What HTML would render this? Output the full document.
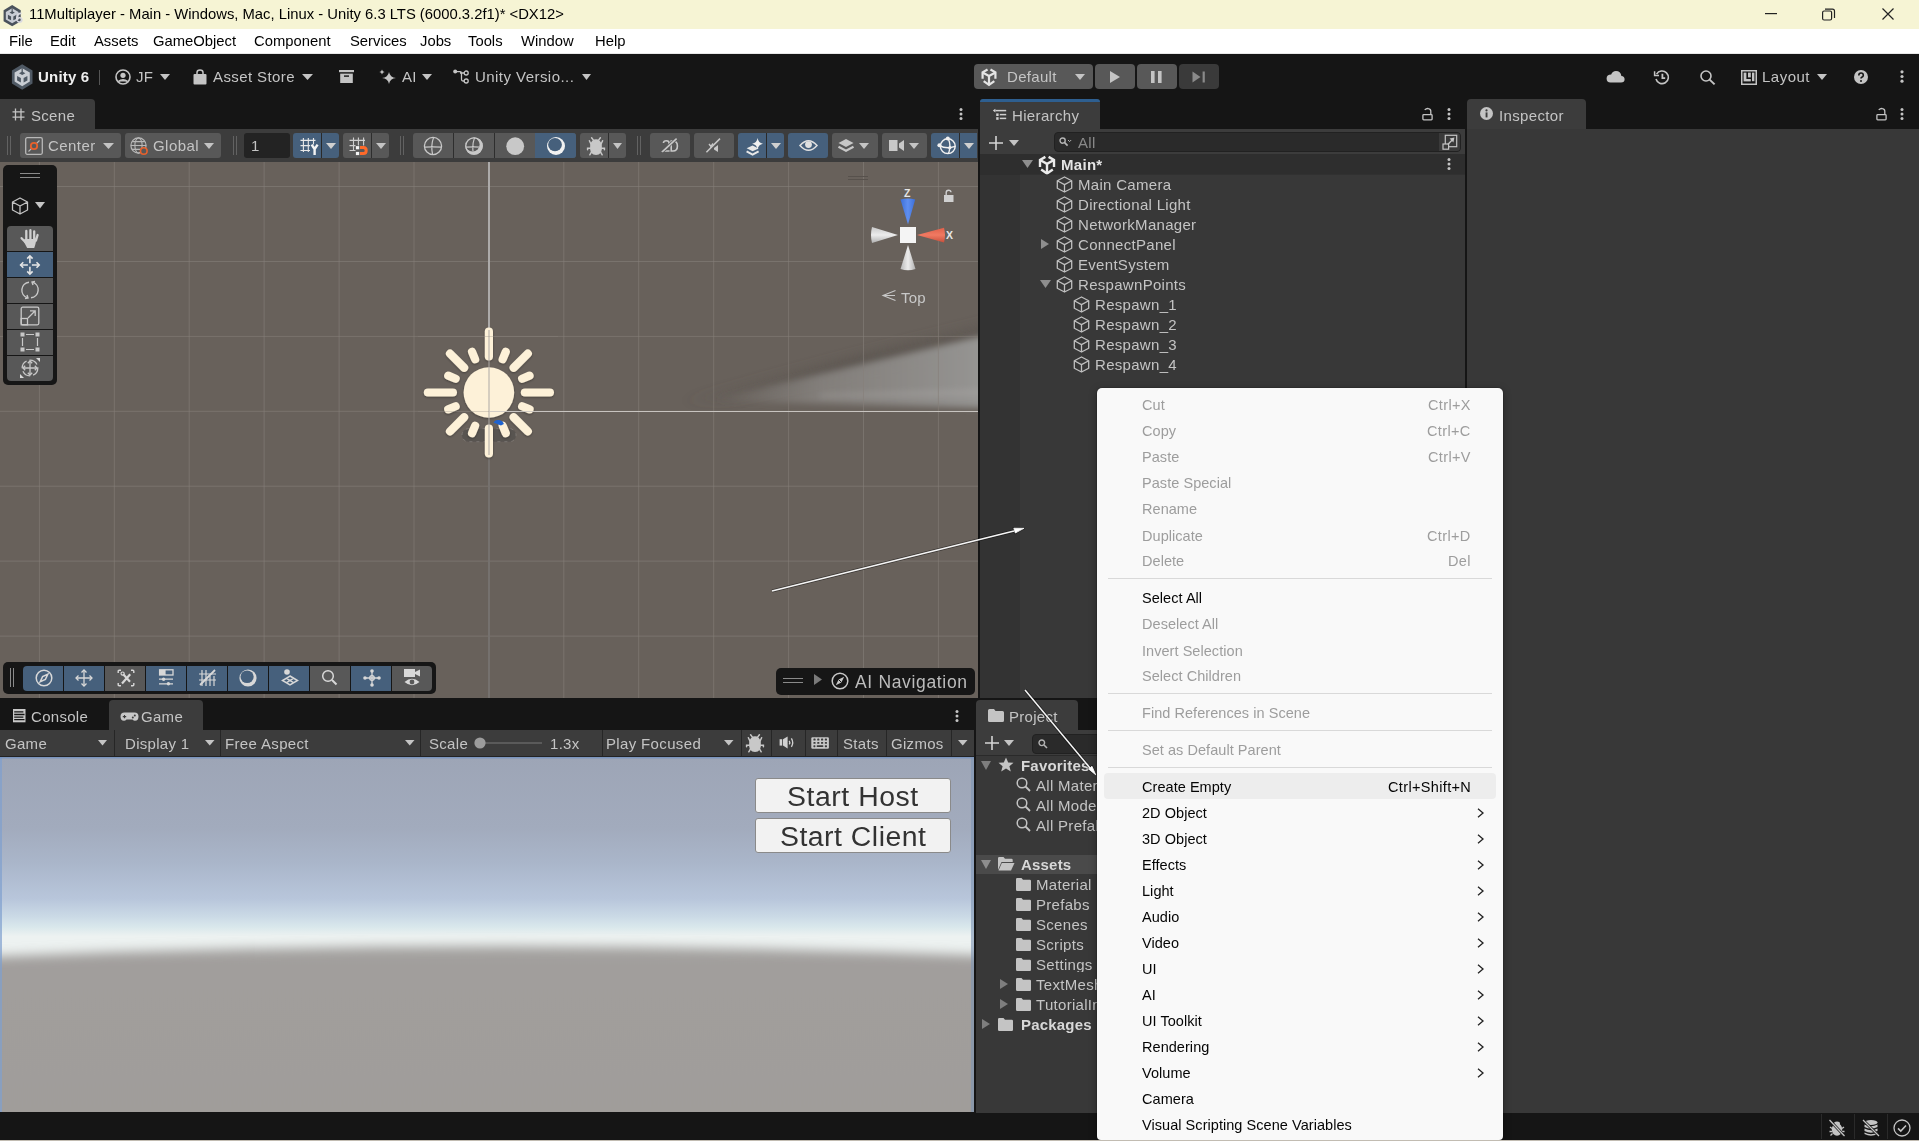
<!DOCTYPE html>
<html><head><meta charset="utf-8"><style>
html,body{margin:0;padding:0;}
body{width:1919px;height:1141px;position:relative;overflow:hidden;background:#151515;font-family:"Liberation Sans",sans-serif;}
.t{position:absolute;white-space:nowrap;line-height:1;will-change:transform;}
.r{position:absolute;}
.s{position:absolute;overflow:visible;}
</style></head><body>
<div class="r" style="left:0px;top:0px;width:1919px;height:29px;background:#f6f4d4;"></div>
<div class="t" style="left:29px;top:7.47px;font-size:14.8px;color:#000;">11Multiplayer - Main - Windows, Mac, Linux - Unity 6.3 LTS (6000.3.2f1)* &lt;DX12&gt;</div>
<svg class="s" style="left:1765px;top:13px;" width="12" height="2" viewBox="0 0 12 2"><rect x="0" y="0" width="12" height="1.2" fill="#222"/></svg>
<svg class="s" style="left:1822px;top:8px;" width="14" height="13" viewBox="0 0 14 13"><rect x="0.6" y="3" width="9" height="9" rx="1.5" fill="none" stroke="#222" stroke-width="1.2"/><path d="M3 1.2H10.5Q12.5 1.2 12.5 3.2V10" fill="none" stroke="#222" stroke-width="1.2"/></svg>
<svg class="s" style="left:1882px;top:8px;" width="12" height="12" viewBox="0 0 12 12"><path d="M0.5 0.5L11.5 11.5M11.5 0.5L0.5 11.5" stroke="#222" stroke-width="1.2"/></svg>
<div class="r" style="left:0px;top:29px;width:1919px;height:25px;background:#ffffff;"></div>
<div class="r" style="left:0px;top:53px;width:1919px;height:1px;background:#e8e8e8;"></div>
<div class="t" style="left:9px;top:34.17px;font-size:14.8px;color:#000;">File</div>
<div class="t" style="left:50px;top:34.17px;font-size:14.8px;color:#000;">Edit</div>
<div class="t" style="left:94px;top:34.17px;font-size:14.8px;color:#000;">Assets</div>
<div class="t" style="left:153px;top:34.17px;font-size:14.8px;color:#000;">GameObject</div>
<div class="t" style="left:254px;top:34.17px;font-size:14.8px;color:#000;">Component</div>
<div class="t" style="left:350px;top:34.17px;font-size:14.8px;color:#000;">Services</div>
<div class="t" style="left:420px;top:34.17px;font-size:14.8px;color:#000;">Jobs</div>
<div class="t" style="left:468px;top:34.17px;font-size:14.8px;color:#000;">Tools</div>
<div class="t" style="left:521px;top:34.17px;font-size:14.8px;color:#000;">Window</div>
<div class="t" style="left:595px;top:34.17px;font-size:14.8px;color:#000;">Help</div>
<div class="r" style="left:0px;top:54px;width:1919px;height:45px;background:#151515;"></div>
<svg class="s" style="left:10px;top:63px;" width="24" height="28.0" viewBox="0 0 24 28.0"><g transform="scale(1.0)">
<path d="M12.2 1.2L22.5 7.4V20.6L12.2 26.8L1.9 20.6V7.4Z" fill="#4f5964"/>
<path d="M12.2 5.2L19.8 9.6V18.6L12.2 23.2L4.6 18.6V9.6Z" fill="#c9cdd3"/>
<path d="M12.2 8.6L15.4 10.2L12.2 12L9 10.2Z" fill="#4f5964"/>
<path d="M12.2 5.2V9.5" stroke="#4f5964" stroke-width="1.3"/>
<path d="M7.1 13L10.9 15V19.6L7.1 17.6Z" fill="#4f5964"/>
<path d="M17.4 13L13.6 15V19.6L17.4 17.6Z" fill="#4f5964"/>
</g></svg>
<svg class="s" style="left:2.4px;top:3.8px;" width="20" height="23.333333333333332" viewBox="0 0 20 23.333333333333332"><g transform="scale(0.8333333333333334)">
<path d="M12.2 1.2L22.5 7.4V20.6L12.2 26.8L1.9 20.6V7.4Z" fill="#4a525c"/>
<path d="M12.2 5.2L19.8 9.6V18.6L12.2 23.2L4.6 18.6V9.6Z" fill="#c8ccd4"/>
<path d="M12.2 8.6L15.4 10.2L12.2 12L9 10.2Z" fill="#4a525c"/>
<path d="M12.2 5.2V9.5" stroke="#4a525c" stroke-width="1.3"/>
<path d="M7.1 13L10.9 15V19.6L7.1 17.6Z" fill="#4a525c"/>
<path d="M17.4 13L13.6 15V19.6L17.4 17.6Z" fill="#4a525c"/>
</g></svg>
<svg class="s" style="left:15px;top:12px;" width="8" height="11" viewBox="0 0 8 11"><path d="M6.5 1.5Q3.5 1 2.2 4Q1.2 6.5 2 8.5Q3 10.5 5 10Q7 9.5 6.8 7.5Q6.5 5.5 4.5 5.8Q3 6 2.4 7" fill="none" stroke="#d8d8e0" stroke-width="1.6"/></svg>
<div class="t" style="left:38px;top:69.30px;font-size:15px;color:#eeeeee;font-weight:bold;letter-spacing:0.2px;">Unity 6</div>
<div class="r" style="left:99px;top:70px;width:1px;height:15px;background:#555;"></div>
<svg class="s" style="left:115px;top:69px;" width="16" height="16" viewBox="0 0 16 16"><circle cx="8" cy="8" r="7" fill="none" stroke="#c4c4c4" stroke-width="1.6"/><circle cx="8" cy="6.3" r="2.6" fill="#c4c4c4"/><path d="M3.2 12.6Q8 8.8 12.8 12.6" fill="#c4c4c4" stroke="#c4c4c4" stroke-width="1.5"/></svg>
<div class="t" style="left:136px;top:69.30px;font-size:15px;color:#c4c4c4;letter-spacing:0.2px;">JF</div>
<svg class="s" style="left:160px;top:74px;" width="10" height="6" viewBox="0 0 10 6"><path d="M0 0H10L5.0 6Z" fill="#c4c4c4"/></svg>
<svg class="s" style="left:193px;top:69px;" width="14" height="16" viewBox="0 0 14 16"><path d="M4 5V3.5Q4 1 7 1Q10 1 10 3.5V5" fill="none" stroke="#c4c4c4" stroke-width="1.5"/><rect x="0.5" y="5" width="13" height="10.5" rx="1" fill="#c4c4c4"/></svg>
<div class="t" style="left:213px;top:69.30px;font-size:15px;color:#c4c4c4;letter-spacing:0.4px;">Asset Store</div>
<svg class="s" style="left:302px;top:74px;" width="11" height="6" viewBox="0 0 11 6"><path d="M0 0H11L5.5 6Z" fill="#c4c4c4"/></svg>
<svg class="s" style="left:339px;top:70px;" width="15" height="13" viewBox="0 0 15 13"><rect x="0" y="0" width="15" height="2.2" fill="#c4c4c4"/><rect x="1.2" y="3.6" width="12.6" height="9.4" fill="#c4c4c4"/><rect x="5" y="5.4" width="5" height="1.4" fill="#151515"/></svg>
<svg class="s" style="left:379px;top:69px;" width="18" height="15" viewBox="0 0 18 15"><path d="M10 3Q11 8.5 17 9Q11 9.5 10 15Q9 9.5 3 9Q9 8.5 10 3Z" fill="#c4c4c4"/><path d="M3 0.5Q3.4 2.6 5.6 3Q3.4 3.4 3 5.5Q2.6 3.4 0.4 3Q2.6 2.6 3 0.5Z" fill="#c4c4c4"/></svg>
<div class="t" style="left:401.5px;top:69.30px;font-size:15px;color:#c4c4c4;letter-spacing:0.2px;">AI</div>
<svg class="s" style="left:422px;top:74px;" width="10" height="6" viewBox="0 0 10 6"><path d="M0 0H10L5.0 6Z" fill="#c4c4c4"/></svg>
<svg class="s" style="left:453px;top:69px;" width="16" height="15" viewBox="0 0 16 15"><circle cx="2.2" cy="2.6" r="2" fill="#c4c4c4"/><circle cx="13.2" cy="4" r="2" fill="none" stroke="#c4c4c4" stroke-width="1.3"/><circle cx="13.2" cy="12" r="2" fill="none" stroke="#c4c4c4" stroke-width="1.3"/><path d="M2.2 2.6H7Q8.5 2.6 8.5 4V10.5Q8.5 12 10 12H11.2M7 4H11.2" fill="none" stroke="#c4c4c4" stroke-width="1.3"/></svg>
<div class="t" style="left:475px;top:69.30px;font-size:15px;color:#c4c4c4;letter-spacing:0.45px;">Unity Versio...</div>
<svg class="s" style="left:581.5px;top:74px;" width="9" height="6" viewBox="0 0 9 6"><path d="M0 0H9L4.5 6Z" fill="#c4c4c4"/></svg>
<div class="r" style="left:974px;top:64px;width:119px;height:25px;background:#585858;border-radius:4px;"></div>
<svg class="s" style="left:978.1px;top:66.2px;" width="22" height="22" viewBox="0 0 22 22"><g transform="scale(0.9166666666666666)" fill="none" stroke="#e4e4e4" stroke-width="2.4" stroke-linejoin="miter" stroke-linecap="butt">
<path d="M5 14V7L10.4 3.9"/><path d="M19 14V7L13.6 3.9"/><path d="M5 7L12 10.8L19 7"/><path d="M12 10.8V20.5"/><path d="M6.2 16.4L12 20.5L17.8 16.4"/>
</g></svg>
<div class="t" style="left:1007px;top:69.30px;font-size:15px;color:#c4c4c4;letter-spacing:0.3px;">Default</div>
<svg class="s" style="left:1074.5px;top:74px;" width="10" height="6" viewBox="0 0 10 6"><path d="M0 0H10L5.0 6Z" fill="#c4c4c4"/></svg>
<div class="r" style="left:1095px;top:64px;width:40px;height:25px;background:#585858;border-radius:4px;"></div>
<svg class="s" style="left:1110px;top:71px;" width="10" height="12" viewBox="0 0 10 12"><path d="M0 0L10 6L0 12Z" fill="#c4c4c4"/></svg>
<div class="r" style="left:1137px;top:64px;width:40px;height:25px;background:#585858;border-radius:4px;"></div>
<svg class="s" style="left:1151px;top:71px;" width="11" height="12" viewBox="0 0 11 12"><rect x="0" y="0" width="3.6" height="12" fill="#c4c4c4"/><rect x="7" y="0" width="3.6" height="12" fill="#c4c4c4"/></svg>
<div class="r" style="left:1179px;top:64px;width:40px;height:25px;background:#3a3a3a;border-radius:4px;"></div>
<svg class="s" style="left:1192px;top:71px;" width="14" height="12" viewBox="0 0 14 12"><path d="M0.5 0.5L8.5 6L0.5 11.5Z" fill="#8a8a8a"/><rect x="10.6" y="0.5" width="2.2" height="11" fill="#8a8a8a"/></svg>
<svg class="s" style="left:1606px;top:70px;" width="19" height="13" viewBox="0 0 19 13"><path d="M4.5 12.5H15Q18.6 12.5 18.6 9.3Q18.6 6.2 15.4 6Q14.6 1 10 1Q6.4 1 5.2 4.6Q0.6 4.8 0.6 8.6Q0.6 12.5 4.5 12.5Z" fill="#c4c4c4"/></svg>
<svg class="s" style="left:1654px;top:70px;" width="16" height="15" viewBox="0 0 16 15"><path d="M2.6 4.2A6.3 6.3 0 1 1 2 9" fill="none" stroke="#c4c4c4" stroke-width="1.6"/><path d="M0.6 1.2V5.6H5" fill="none" stroke="#c4c4c4" stroke-width="1.5"/><path d="M8.4 3.8V8.2H11.2" fill="none" stroke="#c4c4c4" stroke-width="1.8"/></svg>
<svg class="s" style="left:1700px;top:70px;" width="16" height="15" viewBox="0 0 16 15"><circle cx="6" cy="6" r="5" fill="none" stroke="#c4c4c4" stroke-width="1.6"/><path d="M9.6 9.6L14.6 14.4" stroke="#c4c4c4" stroke-width="2"/></svg>
<svg class="s" style="left:1741px;top:70px;" width="16" height="15" viewBox="0 0 16 15"><rect x="0.75" y="0.75" width="14.5" height="13.5" fill="none" stroke="#c4c4c4" stroke-width="1.5"/><rect x="2.6" y="2.6" width="2.8" height="6.4" fill="#c4c4c4"/><rect x="7" y="2.6" width="2.8" height="4.8" fill="#c4c4c4"/><rect x="11" y="2.6" width="2.4" height="8.6" fill="#c4c4c4"/><rect x="2.6" y="9" width="7.2" height="2.4" fill="#c4c4c4"/></svg>
<div class="t" style="left:1762px;top:69.30px;font-size:15px;color:#c4c4c4;letter-spacing:0.5px;">Layout</div>
<svg class="s" style="left:1816.5px;top:74px;" width="10" height="6" viewBox="0 0 10 6"><path d="M0 0H10L5.0 6Z" fill="#c4c4c4"/></svg>
<svg class="s" style="left:1854px;top:70px;" width="14" height="14" viewBox="0 0 14 14"><circle cx="7" cy="7" r="7" fill="#c4c4c4"/><path d="M4.8 5.4Q4.8 3 7 3Q9.3 3 9.3 5.2Q9.3 6.6 7.8 7.2Q7 7.6 7 8.6" fill="none" stroke="#151515" stroke-width="1.6"/><circle cx="7" cy="10.9" r="1" fill="#151515"/></svg>
<svg class="s" style="left:1900px;top:70px;" width="4" height="13" viewBox="0 0 4 13"><circle cx="2" cy="1.8" r="1.6" fill="#c4c4c4"/><circle cx="2" cy="6.5" r="1.6" fill="#c4c4c4"/><circle cx="2" cy="11.2" r="1.6" fill="#c4c4c4"/></svg>
<div class="r" style="left:0px;top:99px;width:95px;height:31px;background:#3c3c3c;border-radius:0 4px 0 0;"></div>
<svg class="s" style="left:12px;top:108px;" width="13" height="13" viewBox="0 0 13 13"><path d="M3.5 0.5V12.5M9 0.5V12.5M0.5 3.8H12.5M0.5 9.2H12.5" stroke="#c4c4c4" stroke-width="1.3"/></svg>
<div class="t" style="left:31px;top:108.30px;font-size:15px;color:#c4c4c4;letter-spacing:0.3px;">Scene</div>
<svg class="s" style="left:958.5px;top:108px;" width="4" height="12" viewBox="0 0 4 12"><circle cx="2" cy="1.6" r="1.5" fill="#c4c4c4"/><circle cx="2" cy="6" r="1.5" fill="#c4c4c4"/><circle cx="2" cy="10.4" r="1.5" fill="#c4c4c4"/></svg>
<div class="r" style="left:0px;top:129px;width:978px;height:33px;background:#3c3c3c;"></div>
<div class="r" style="left:7px;top:136px;width:1px;height:19px;background:#626262;"></div>
<div class="r" style="left:10px;top:136px;width:1px;height:19px;background:#626262;"></div>
<div class="r" style="left:20px;top:133px;width:101px;height:25px;background:#585858;border-radius:3px;"></div>
<svg class="s" style="left:25px;top:137px;" width="18" height="18" viewBox="0 0 18 18"><rect x="0.7" y="0.7" width="16.6" height="16.6" rx="1.5" fill="none" stroke="#b8b8b8" stroke-width="1.3"/><path d="M3.5 14.5L14.5 3.5" stroke="#b8b8b8" stroke-width="1.1"/><circle cx="9" cy="9" r="3.2" fill="#585858" stroke="#e8612c" stroke-width="1.8"/></svg>
<div class="t" style="left:47.5px;top:138.30px;font-size:15px;color:#c4c4c4;letter-spacing:0.45px;">Center</div>
<svg class="s" style="left:102.5px;top:143px;" width="11" height="6" viewBox="0 0 11 6"><path d="M0 0H11L5.5 6Z" fill="#c4c4c4"/></svg>
<div class="r" style="left:125px;top:133px;width:96px;height:25px;background:#585858;border-radius:3px;"></div>
<svg class="s" style="left:130px;top:137px;" width="19" height="19" viewBox="0 0 19 19"><circle cx="8.5" cy="8.5" r="7.6" fill="none" stroke="#b8b8b8" stroke-width="1.2"/><ellipse cx="8.5" cy="8.5" rx="3.6" ry="7.6" fill="none" stroke="#b8b8b8" stroke-width="1.1"/><path d="M1 8.5H16M2.2 4.6H14.8M2.2 12.4H14.8" stroke="#b8b8b8" stroke-width="1.1"/><circle cx="13.8" cy="14" r="3.3" fill="#585858" stroke="#e8612c" stroke-width="1.6"/></svg>
<div class="t" style="left:152.7px;top:138.30px;font-size:15px;color:#c4c4c4;letter-spacing:0.45px;">Global</div>
<svg class="s" style="left:203.5px;top:143px;" width="10" height="6" viewBox="0 0 10 6"><path d="M0 0H10L5.0 6Z" fill="#c4c4c4"/></svg>
<div class="r" style="left:233px;top:136px;width:1px;height:19px;background:#626262;"></div>
<div class="r" style="left:236px;top:136px;width:1px;height:19px;background:#626262;"></div>
<div class="r" style="left:244px;top:133px;width:46px;height:25px;background:#232323;border-radius:3px;"></div>
<div class="t" style="left:251px;top:138.30px;font-size:15px;color:#c4c4c4;">1</div>
<div class="r" style="left:293px;top:133px;width:46px;height:25px;background:#46607c;border-radius:3px;"></div>
<div class="r" style="left:321px;top:133px;width:1px;height:25px;background:#2a2a2a;"></div>
<svg class="s" style="left:300px;top:137px;" width="19" height="19" viewBox="0 0 19 19"><path d="M3.4 1V15M8.3 1V15M13.5 1V7.5M0.5 3.4H15.5M0.5 8.6H10M0.5 13.5H10" stroke="#e8e8e8" stroke-width="1.1"/><path d="M11.6 7.6L14.6 12L17.6 7.6M14.6 12V18" fill="none" stroke="#f4f4f4" stroke-width="2.4"/></svg>
<svg class="s" style="left:326px;top:143px;" width="10" height="6" viewBox="0 0 10 6"><path d="M0 0H10L5.0 6Z" fill="#d0d0d0"/></svg>
<div class="r" style="left:343px;top:133px;width:46px;height:25px;background:#585858;border-radius:3px;"></div>
<div class="r" style="left:371px;top:133px;width:1px;height:25px;background:#2e2e2e;"></div>
<svg class="s" style="left:349px;top:137px;" width="20" height="19" viewBox="0 0 20 19"><path d="M4.5 0.5V13M9.4 0.5V8.5M14.6 0.5V8.5M0.5 3.4H16M0.5 8.6H6.5M0.5 13.5H6.5" stroke="#cfcfcf" stroke-width="1.1"/><rect x="6.9" y="9.1" width="3.3" height="3.2" fill="#f4f4f4"/><rect x="6.9" y="14.9" width="3.3" height="3.2" fill="#f4f4f4"/><path d="M11 10.6H14.4Q17.2 10.6 17.2 13.6Q17.2 16.6 14.4 16.6H11" fill="none" stroke="#ff6a2a" stroke-width="3"/></svg>
<svg class="s" style="left:376px;top:143px;" width="10" height="6" viewBox="0 0 10 6"><path d="M0 0H10L5.0 6Z" fill="#c4c4c4"/></svg>
<div class="r" style="left:400px;top:136px;width:1px;height:19px;background:#626262;"></div>
<div class="r" style="left:403px;top:136px;width:1px;height:19px;background:#626262;"></div>
<div class="r" style="left:413px;top:133px;width:163px;height:25px;background:#585858;border-radius:3px;"></div>
<div class="r" style="left:535px;top:133px;width:41px;height:25px;background:#46607c;border-radius:0 3px 3px 0;"></div>
<div class="r" style="left:453px;top:133px;width:1px;height:25px;background:#2e2e2e;"></div>
<div class="r" style="left:494px;top:133px;width:1px;height:25px;background:#2e2e2e;"></div>
<svg class="s" style="left:423px;top:136px;" width="20" height="20" viewBox="0 0 20 20"><circle cx="10" cy="10" r="8.6" fill="none" stroke="#c8c8c8" stroke-width="1.3"/><path d="M1.6 11.2Q10 10.6 18.4 11.2M10.6 1.4Q7.6 10 9.6 18.6" stroke="#c8c8c8" stroke-width="1.2" fill="none"/></svg>
<svg class="s" style="left:464px;top:136px;" width="20" height="20" viewBox="0 0 20 20"><defs><clipPath id="shc"><circle cx="8.6" cy="8.6" r="7"/></clipPath></defs><circle cx="10" cy="10" r="8.8" fill="#c8c8c8"/><circle cx="8.6" cy="8.6" r="7" fill="#585858"/><circle cx="10" cy="10" r="8.2" fill="none" stroke="#c8c8c8" stroke-width="1.2"/><g clip-path="url(#shc)"><path d="M1.6 11.2Q10 10.6 18.4 11.2M10.6 1.4Q7.6 10 9.6 18.6" stroke="#c8c8c8" stroke-width="1.2" fill="none"/></g></svg>
<svg class="s" style="left:506px;top:137px;" width="19" height="19" viewBox="0 0 19 19"><circle cx="9.2" cy="9.2" r="8.9" fill="#c8c8c8"/></svg>
<svg class="s" style="left:546px;top:136px;" width="20" height="20" viewBox="0 0 20 20"><circle cx="10" cy="10" r="9" fill="#f2f2f2"/><ellipse cx="9" cy="8.7" rx="6.9" ry="6.6" fill="#46607c"/></svg>
<div class="r" style="left:580px;top:133px;width:46px;height:25px;background:#585858;border-radius:3px;"></div>
<div class="r" style="left:608px;top:133px;width:1px;height:25px;background:#2e2e2e;"></div>
<svg class="s" style="left:585px;top:136px;" width="22" height="20" viewBox="0 0 22 20"><path d="M11 3.2Q15.5 3.2 16.8 9Q17.5 14 16 16.5Q14 19 11 19Q8 19 6 16.5Q4.5 14 5.2 9Q6.5 3.2 11 3.2Z" fill="#c8c8c8"/><g stroke="#c8c8c8" stroke-width="1.5" stroke-linecap="round" fill="none"><path d="M8.6 4.4L6.6 1.8M13.4 4.4L15.4 1.8M6 8.2L4.4 4.8M16 8.2L17.6 4.8M5.2 12.2H2.6V13.8M16.8 12.2H19.4V13.8M6.4 16.2L4.8 18.8M15.6 16.2L17.2 18.8"/></g></svg>
<svg class="s" style="left:613px;top:143px;" width="9" height="6" viewBox="0 0 9 6"><path d="M0 0H9L4.5 6Z" fill="#c4c4c4"/></svg>
<div class="r" style="left:637px;top:136px;width:1px;height:19px;background:#626262;"></div>
<div class="r" style="left:640px;top:136px;width:1px;height:19px;background:#626262;"></div>
<div class="r" style="left:650px;top:133px;width:40px;height:25px;background:#585858;border-radius:3px;"></div>
<svg class="s" style="left:660px;top:137px;" width="20" height="17" viewBox="0 0 20 17"><path d="M3.4 6Q3.6 3.8 6.4 3.8Q9.2 3.8 9.2 6.4Q9.2 8.4 3 14H9.6" fill="none" stroke="#c8c8c8" stroke-width="1.6"/><path d="M11.2 4H13Q17.4 4 17.4 9Q17.4 14 13 14H11.2Z" fill="none" stroke="#c8c8c8" stroke-width="1.6"/><path d="M2.2 14.8L16.6 1.6" stroke="#585858" stroke-width="3"/><path d="M2.2 14.8L16.6 1.6" stroke="#c8c8c8" stroke-width="1.6"/></svg>
<div class="r" style="left:694px;top:133px;width:40px;height:25px;background:#585858;border-radius:3px;"></div>
<svg class="s" style="left:705px;top:137px;" width="17" height="17" viewBox="0 0 17 17"><path d="M9 11L13 8V15L9 12.5Z" fill="#c8c8c8"/><path d="M4 7L6 9.5L8 6.5M6 9.5V11" fill="none" stroke="#c8c8c8" stroke-width="1.4"/><path d="M1.4 15.2L15 1.6" stroke="#c8c8c8" stroke-width="1.5"/></svg>
<div class="r" style="left:738px;top:133px;width:46px;height:25px;background:#46607c;border-radius:3px;"></div>
<div class="r" style="left:766px;top:133px;width:1px;height:25px;background:#2a2a2a;"></div>
<svg class="s" style="left:745px;top:136px;" width="19" height="20" viewBox="0 0 19 20"><path d="M1.6 12.2L7.6 9.4L13.6 12.4L7.6 15.2Z" fill="#e8e8e8"/><path d="M1.6 15.4L7.6 18.6L13.6 15.4" fill="none" stroke="#e8e8e8" stroke-width="2"/><path d="M12.6 2Q13.4 6.9 18 7.8Q13.4 8.7 12.6 13.4Q11.8 8.7 7.2 7.8Q11.8 6.9 12.6 2Z" fill="#f0f0f0"/></svg>
<svg class="s" style="left:771px;top:143px;" width="10" height="6" viewBox="0 0 10 6"><path d="M0 0H10L5.0 6Z" fill="#d0d0d0"/></svg>
<div class="r" style="left:788px;top:133px;width:40px;height:25px;background:#46607c;border-radius:3px;"></div>
<svg class="s" style="left:799px;top:139px;" width="19" height="13" viewBox="0 0 19 13"><path d="M1 6.5Q9.5 -3 18 6.5Q9.5 16 1 6.5Z" fill="none" stroke="#e0e0e0" stroke-width="1.5"/><circle cx="9.5" cy="5.6" r="3.4" fill="#e0e0e0"/></svg>
<div class="r" style="left:832px;top:133px;width:46px;height:25px;background:#585858;border-radius:3px;"></div>
<svg class="s" style="left:838px;top:138px;" width="16" height="15" viewBox="0 0 16 15"><path d="M0.5 5L8 1L15.5 5L8 9Z" fill="#c8c8c8"/><path d="M0.5 8.8L8 12.8L15.5 8.8" fill="none" stroke="#c8c8c8" stroke-width="2.2"/></svg>
<svg class="s" style="left:859px;top:143px;" width="10" height="6" viewBox="0 0 10 6"><path d="M0 0H10L5.0 6Z" fill="#c4c4c4"/></svg>
<div class="r" style="left:882px;top:133px;width:45px;height:25px;background:#585858;border-radius:3px;"></div>
<svg class="s" style="left:889px;top:139px;" width="16" height="13" viewBox="0 0 16 13"><rect x="0" y="1" width="8.5" height="11" fill="#c8c8c8"/><path d="M10 4.5L15 1V12L10 8.5Z" fill="#c8c8c8"/></svg>
<svg class="s" style="left:909px;top:143px;" width="10" height="6" viewBox="0 0 10 6"><path d="M0 0H10L5.0 6Z" fill="#c4c4c4"/></svg>
<div class="r" style="left:931px;top:133px;width:46px;height:25px;background:#46607c;border-radius:3px 0 0 3px;"></div>
<div class="r" style="left:959px;top:133px;width:1px;height:25px;background:#2a2a2a;"></div>
<svg class="s" style="left:937px;top:136px;" width="20" height="20" viewBox="0 0 20 20"><circle cx="10.8" cy="10.2" r="7.4" fill="none" stroke="#f0f0f0" stroke-width="1.5"/><path d="M2.2 9.3Q7 12.2 12.8 11.7L18.2 10.4M10.8 2.4Q13.3 6 12.8 11.7Q12.4 15.5 11.4 17.8" fill="none" stroke="#f0f0f0" stroke-width="1.4"/><circle cx="10.8" cy="2.5" r="2" fill="#f0f0f0"/><circle cx="2.4" cy="9.3" r="2" fill="#f0f0f0"/><circle cx="12.8" cy="11.7" r="1.6" fill="#f0f0f0"/></svg>
<svg class="s" style="left:964px;top:143px;" width="10" height="6" viewBox="0 0 10 6"><path d="M0 0H10L5.0 6Z" fill="#d0d0d0"/></svg>
<div class="r" style="left:0px;top:162px;width:978px;height:536px;background:#68615b;"></div>
<svg class="s" style="left:0px;top:162px;overflow:hidden;" width="978" height="536" viewBox="0 0 978 536"><defs>
<linearGradient id="bm" x1="714" y1="0" x2="978" y2="0" gradientUnits="userSpaceOnUse"><stop offset="0" stop-color="#8e8b88" stop-opacity="0"/><stop offset="0.4" stop-color="#8e8b88" stop-opacity="0.7"/><stop offset="1" stop-color="#959492" stop-opacity="1"/></linearGradient>
<linearGradient id="bs" x1="660" y1="0" x2="978" y2="0" gradientUnits="userSpaceOnUse"><stop offset="0" stop-color="#58524d" stop-opacity="0"/><stop offset="0.6" stop-color="#58524d" stop-opacity="0.8"/><stop offset="1" stop-color="#58524d" stop-opacity="0.5"/></linearGradient>
<filter id="bl" x="-20%" y="-50%" width="140%" height="200%"><feGaussianBlur stdDeviation="3"/></filter>
<filter id="bl2" x="-20%" y="-50%" width="140%" height="200%"><feGaussianBlur stdDeviation="6"/></filter>
</defs>
<path d="M680 240L1000 158V176L730 238Z" fill="url(#bs)" filter="url(#bl2)"/>
<path d="M714 237L1000 170V246L714 239Z" fill="url(#bm)" filter="url(#bl)"/>
<path d="M820 232L1000 226V234L820 235Z" fill="#a8a6a4" opacity="0.45" filter="url(#bl)"/>
</svg>
<svg class="s" style="left:0px;top:162px;" width="978" height="536" viewBox="0 0 978 536"><rect x="38.9" y="0" width="1" height="536" fill="#857f79" opacity="0.6"/><rect x="113.8" y="0" width="1" height="536" fill="#857f79" opacity="0.6"/><rect x="188.7" y="0" width="1" height="536" fill="#857f79" opacity="0.6"/><rect x="263.6" y="0" width="1" height="536" fill="#857f79" opacity="0.6"/><rect x="338.6" y="0" width="1" height="536" fill="#857f79" opacity="0.6"/><rect x="413.5" y="0" width="1" height="536" fill="#857f79" opacity="0.6"/><rect x="563.3" y="0" width="1" height="536" fill="#857f79" opacity="0.6"/><rect x="638.2" y="0" width="1" height="536" fill="#857f79" opacity="0.6"/><rect x="713.2" y="0" width="1" height="536" fill="#857f79" opacity="0.6"/><rect x="788.1" y="0" width="1" height="536" fill="#857f79" opacity="0.6"/><rect x="863.0" y="0" width="1" height="536" fill="#857f79" opacity="0.6"/><rect x="937.9" y="0" width="1" height="536" fill="#857f79" opacity="0.6"/><rect x="0" y="24.0" width="978" height="1" fill="#857f79" opacity="0.6"/><rect x="0" y="99.0" width="978" height="1" fill="#857f79" opacity="0.6"/><rect x="0" y="173.9" width="978" height="1" fill="#857f79" opacity="0.6"/><rect x="0" y="248.8" width="978" height="1" fill="#857f79" opacity="0.6"/><rect x="0" y="323.7" width="978" height="1" fill="#857f79" opacity="0.6"/><rect x="0" y="398.6" width="978" height="1" fill="#857f79" opacity="0.6"/><rect x="0" y="473.6" width="978" height="1" fill="#857f79" opacity="0.6"/></svg>
<div class="r" style="left:488px;top:162px;width:2px;height:170px;background:#acaaa9;"></div>
<div class="r" style="left:488px;top:455px;width:2px;height:243px;background:#75716e;"></div>
<div class="r" style="left:489px;top:411px;width:489px;height:1px;background:#c8c4c0;"></div>
<svg class="s" style="left:400px;top:300px;" width="180" height="180" viewBox="0 0 180 180"><defs><filter id="sh" x="-30%" y="-30%" width="160%" height="160%"><feDropShadow dx="0" dy="1" stdDeviation="1.2" flood-color="#000" flood-opacity="0.35"/></filter></defs>
<rect x="62" y="128.7" width="54" height="13" rx="6.5" fill="#4e4b49" opacity="0.6"/><rect x="62" y="128.7" width="54" height="13" rx="6.5" fill="none" stroke="#9a9692" stroke-width="0.8" stroke-dasharray="3 4" opacity="0.6"/>
<g filter="url(#sh)"><line x1="88.90" y1="56.50" x2="88.90" y2="31.50" stroke="#fdf1d8" stroke-width="8.2" stroke-linecap="round"/><line x1="124.90" y1="92.50" x2="149.90" y2="92.50" stroke="#fdf1d8" stroke-width="8.2" stroke-linecap="round"/><line x1="88.90" y1="128.50" x2="88.90" y2="153.50" stroke="#fdf1d8" stroke-width="8.2" stroke-linecap="round"/><line x1="52.90" y1="92.50" x2="27.90" y2="92.50" stroke="#fdf1d8" stroke-width="8.2" stroke-linecap="round"/><line x1="113.65" y1="67.75" x2="127.79" y2="53.61" stroke="#fdf1d8" stroke-width="8.2" stroke-linecap="round"/><line x1="113.65" y1="117.25" x2="127.79" y2="131.39" stroke="#fdf1d8" stroke-width="8.2" stroke-linecap="round"/><line x1="64.15" y1="117.25" x2="50.01" y2="131.39" stroke="#fdf1d8" stroke-width="8.2" stroke-linecap="round"/><line x1="64.15" y1="67.75" x2="50.01" y2="53.61" stroke="#fdf1d8" stroke-width="8.2" stroke-linecap="round"/><line x1="102.68" y1="59.24" x2="105.74" y2="51.85" stroke="#fdf1d8" stroke-width="8.2" stroke-linecap="round"/><line x1="122.16" y1="78.72" x2="129.55" y2="75.66" stroke="#fdf1d8" stroke-width="8.2" stroke-linecap="round"/><line x1="122.16" y1="106.28" x2="129.55" y2="109.34" stroke="#fdf1d8" stroke-width="8.2" stroke-linecap="round"/><line x1="102.68" y1="125.76" x2="105.74" y2="133.15" stroke="#fdf1d8" stroke-width="8.2" stroke-linecap="round"/><line x1="75.12" y1="125.76" x2="72.06" y2="133.15" stroke="#fdf1d8" stroke-width="8.2" stroke-linecap="round"/><line x1="55.64" y1="106.28" x2="48.25" y2="109.34" stroke="#fdf1d8" stroke-width="8.2" stroke-linecap="round"/><line x1="55.64" y1="78.72" x2="48.25" y2="75.66" stroke="#fdf1d8" stroke-width="8.2" stroke-linecap="round"/><line x1="75.12" y1="59.24" x2="72.06" y2="51.85" stroke="#fdf1d8" stroke-width="8.2" stroke-linecap="round"/><circle cx="88.89999999999998" cy="92.5" r="25.3" fill="#fdf1d8"/></g>
<path d="M93.39999999999998 122.5A6 6 0 0 1 103.89999999999998 124.0L100.89999999999998 125.5Z" fill="#1e63d0"/>
</svg>
<div class="r" style="left:488px;top:330px;width:2px;height:125px;background:#aeaaa6;opacity:0.5;"></div>
<div class="r" style="left:418px;top:336px;width:140px;height:1px;background:#8a847e;opacity:0.3;"></div>
<div class="r" style="left:418px;top:411px;width:71px;height:1px;background:#8a847e;opacity:0.3;"></div>
<div class="r" style="left:489px;top:411px;width:70px;height:1px;background:#c8c4c0;opacity:0.8;"></div>
<svg class="s" style="left:860px;top:180px;" width="110" height="130" viewBox="0 0 110 130"><defs>
<linearGradient id="gz" x1="0" x2="1"><stop offset="0" stop-color="#3c6fd8"/><stop offset="0.5" stop-color="#5f8ff0"/><stop offset="1" stop-color="#3c6fd8"/></linearGradient>
<linearGradient id="gx" x1="0" y1="0" x2="0" y2="1"><stop offset="0" stop-color="#e0604a"/><stop offset="0.5" stop-color="#f07a62"/><stop offset="1" stop-color="#c8503c"/></linearGradient>
<linearGradient id="gw" x1="0" y1="0" x2="0" y2="1"><stop offset="0" stop-color="#c8c8c8"/><stop offset="0.5" stop-color="#ececec"/><stop offset="1" stop-color="#b0b0b0"/></linearGradient>
<linearGradient id="gw2" x1="0" x2="1"><stop offset="0" stop-color="#b8b8b8"/><stop offset="0.5" stop-color="#ececec"/><stop offset="1" stop-color="#b0b0b0"/></linearGradient>
</defs>
<path d="M40.5 19.5Q48 17.5 55.2 19.5L48 44.6Z" fill="url(#gz)"/>
<path d="M57 55L84 47.7Q86 55 84 62.4Z" fill="url(#gx)"/>
<path d="M38 55L12 47Q10 55 12 63Z" fill="url(#gw)"/>
<path d="M48 65L55.5 89Q48 91.5 40.5 89Z" fill="url(#gw2)"/>
<rect x="40" y="47" width="16" height="16" fill="#f4f4f4"/>
<text x="44" y="16.5" font-family="Liberation Sans" font-weight="bold" font-size="10.5" fill="#e8e8e8">Z</text>
<text x="86" y="59.4" font-family="Liberation Sans" font-weight="bold" font-size="10.5" fill="#e8e8e8">X</text>
<rect x="84" y="15" width="9.5" height="7" fill="#d0d0d0"/><path d="M86.2 15V12.6Q86.2 10.3 88.6 10.3Q90.8 10.3 91 12.3" fill="none" stroke="#d0d0d0" stroke-width="1.4"/>
<path d="M35.5 110.5L23 115.5L35.5 120.5M23 115.5H35" fill="none" stroke="#c8c8c8" stroke-width="1.1"/>
</svg>
<div class="t" style="left:900.5px;top:289.90px;font-size:15px;color:#c8c8c8;letter-spacing:0.2px;">Top</div>
<div class="r" style="left:848px;top:176px;width:20px;height:1px;background:#57514c;"></div>
<div class="r" style="left:848px;top:179px;width:20px;height:1px;background:#57514c;"></div>
<div class="r" style="left:3px;top:165px;width:54px;height:220px;background:#161616;border-radius:5px;"></div>
<div class="r" style="left:20px;top:173px;width:20px;height:1px;background:#8a8a8a;"></div>
<div class="r" style="left:20px;top:177px;width:20px;height:1px;background:#8a8a8a;"></div>
<svg class="s" style="left:11px;top:197px;" width="18" height="18" viewBox="0 0 18 18"><path d="M9 1L16.5 5V13L9 17L1.5 13V5Z M1.5 5L9 9L16.5 5M9 9V17" fill="none" stroke="#c4c4c4" stroke-width="1.3" stroke-linejoin="round"/></svg>
<svg class="s" style="left:35px;top:202px;" width="10" height="6.5" viewBox="0 0 10 6.5"><path d="M0 0H10L5.0 6.5Z" fill="#c4c4c4"/></svg>
<div class="r" style="left:7px;top:226px;width:46px;height:25px;background:#585858;border-radius:4px 4px 0 0;"></div>
<div class="r" style="left:7px;top:252px;width:46px;height:25px;background:#46607c;"></div>
<div class="r" style="left:7px;top:278px;width:46px;height:25px;background:#585858;"></div>
<div class="r" style="left:7px;top:304px;width:46px;height:25px;background:#585858;"></div>
<div class="r" style="left:7px;top:330px;width:46px;height:25px;background:#585858;"></div>
<div class="r" style="left:7px;top:356px;width:46px;height:25px;background:#585858;border-radius:0 0 4px 4px;"></div>
<svg class="s" style="left:19px;top:228px;" width="22" height="21" viewBox="0 0 22 21"><g stroke="#cfcfcf" stroke-width="2.3" stroke-linecap="round" fill="none"><path d="M7.3 3V11M11.4 2.2V11M15.2 3.3V11M18.6 7L17 12.5M2.6 10.2L6.2 14"/></g><path d="M5.4 11H17.6L16.2 17L15.2 20H8.2L5 14Z" fill="#cfcfcf"/></svg>
<svg class="s" style="left:18px;top:254px;" width="24" height="21" viewBox="0 0 24 21"><g stroke="#e6e6e6" stroke-width="1.6" fill="none"><path d="M11.9 2V9.2M11.9 12.8V20M2.7 11H9.9M13.9 11H21.1"/><path d="M9.2 4.6L11.9 1.9L14.6 4.6M9.2 17.4L11.9 20.1L14.6 17.4M5.3 8.3L2.6 11L5.3 13.7M18.5 8.3L21.2 11L18.5 13.7"/></g></svg>
<svg class="s" style="left:20px;top:280px;" width="20" height="20" viewBox="0 0 20 20"><path d="M7.5 17.8A8 8 0 0 1 9 2.2" fill="none" stroke="#c8c8c8" stroke-width="1.4"/><path d="M12.5 2.2A8 8 0 0 1 11 17.8" fill="none" stroke="#c8c8c8" stroke-width="1.4"/><path d="M5 18.5L8 18L7 15M15 1.5L12 2L13 5" fill="none" stroke="#c8c8c8" stroke-width="1.4"/></svg>
<svg class="s" style="left:20px;top:306px;" width="20" height="20" viewBox="0 0 20 20"><rect x="1.2" y="1.2" width="17.6" height="17.6" rx="1.5" fill="none" stroke="#c8c8c8" stroke-width="1.3"/><rect x="1.2" y="12.5" width="6.3" height="6.3" fill="none" stroke="#c8c8c8" stroke-width="1.3"/><path d="M8 12L15 5M10 4.8H15.2V10" fill="none" stroke="#c8c8c8" stroke-width="1.3"/></svg>
<svg class="s" style="left:20px;top:332px;" width="20" height="20" viewBox="0 0 20 20"><path d="M6 2.5H14M6 17.5H14M2.5 6V14M17.5 6V14" stroke="#c8c8c8" stroke-width="1.2"/><rect x="0.5" y="0.5" width="4" height="4" fill="#c8c8c8"/><rect x="15.5" y="0.5" width="4" height="4" fill="#c8c8c8"/><rect x="0.5" y="15.5" width="4" height="4" fill="#c8c8c8"/><rect x="15.5" y="15.5" width="4" height="4" fill="#c8c8c8"/></svg>
<svg class="s" style="left:19px;top:357px;" width="22" height="22" viewBox="0 0 22 22"><circle cx="11" cy="11" r="7.8" fill="none" stroke="#c8c8c8" stroke-width="1.3" stroke-dasharray="9 3"/><path d="M11 4V18M4 11H18" stroke="#c8c8c8" stroke-width="1.3"/><path d="M8.8 6.2L11 4L13.2 6.2M8.8 15.8L11 18L13.2 15.8M6.2 8.8L4 11L6.2 13.2M15.8 8.8L18 11L15.8 13.2" fill="none" stroke="#c8c8c8" stroke-width="1.3"/><path d="M17 1H21V5Z M1 21V17L5 21Z" fill="#d8d8d8"/></svg>
<div class="r" style="left:3px;top:662px;width:433px;height:32px;background:#161616;border-radius:5px;"></div>
<div class="r" style="left:10px;top:668px;width:1px;height:19px;background:#8a8a8a;"></div>
<div class="r" style="left:13px;top:668px;width:1px;height:19px;background:#8a8a8a;"></div>
<div class="r" style="left:23px;top:666px;width:40px;height:25px;background:#46607c;border-radius:4px 0 0 4px;"></div>
<div class="r" style="left:64px;top:666px;width:40px;height:25px;background:#46607c;"></div>
<div class="r" style="left:105px;top:666px;width:40px;height:25px;background:#585858;"></div>
<div class="r" style="left:146px;top:666px;width:40px;height:25px;background:#46607c;"></div>
<div class="r" style="left:187px;top:666px;width:40px;height:25px;background:#46607c;"></div>
<div class="r" style="left:228px;top:666px;width:40px;height:25px;background:#46607c;"></div>
<div class="r" style="left:269px;top:666px;width:40px;height:25px;background:#46607c;"></div>
<div class="r" style="left:310px;top:666px;width:40px;height:25px;background:#585858;"></div>
<div class="r" style="left:351px;top:666px;width:40px;height:25px;background:#46607c;"></div>
<div class="r" style="left:392px;top:666px;width:40px;height:25px;background:#585858;border-radius:0 4px 4px 0;"></div>
<svg class="s" style="left:34px;top:668px;" width="20" height="20" viewBox="0 0 20 20"><circle cx="10" cy="10" r="7.8" fill="none" stroke="#d8d8d8" stroke-width="1.5"/><path d="M13.8 6.2L8.6 8.6L6.2 13.8L11.4 11.4Z" fill="none" stroke="#d8d8d8" stroke-width="1.5"/></svg>
<svg class="s" style="left:74px;top:668px;" width="20" height="20" viewBox="0 0 20 20"><path d="M10 2V18M2 10H18" stroke="#d8d8d8" stroke-width="1.3"/><path d="M7.5 4.5L10 2L12.5 4.5M7.5 15.5L10 18L12.5 15.5M4.5 7.5L2 10L4.5 12.5M15.5 7.5L18 10L15.5 12.5" fill="none" stroke="#d8d8d8" stroke-width="1.3"/></svg>
<svg class="s" style="left:116px;top:668px;" width="20" height="20" viewBox="0 0 20 20"><path d="M5 2.2H3.2Q2.2 2.2 2.2 3.2V5M15 2.2H16.8Q17.8 2.2 17.8 3.2V5M5 17.8H3.2Q2.2 17.8 2.2 16.8V15M15 17.8H16.8Q17.8 17.8 17.8 16.8V15" fill="none" stroke="#d8d8d8" stroke-width="1.4"/><path d="M6 15.5L14.2 6.3M7.2 6.2L14 13.8" stroke="#d8d8d8" stroke-width="2.2"/><circle cx="6.6" cy="5.6" r="1.6" fill="none" stroke="#d8d8d8" stroke-width="1.2"/></svg>
<svg class="s" style="left:156px;top:668px;" width="20" height="20" viewBox="0 0 20 20"><rect x="3.6" y="1.8" width="13.4" height="5.2" fill="none" stroke="#d8d8d8" stroke-width="1.3"/><rect x="3.6" y="1.8" width="6" height="5.2" fill="#d8d8d8"/><path d="M3 11.2H17M3 15.8H17" stroke="#d8d8d8" stroke-width="1.3"/><circle cx="7.6" cy="11.2" r="1.7" fill="#d8d8d8"/><circle cx="12.4" cy="15.8" r="1.7" fill="#d8d8d8"/></svg>
<svg class="s" style="left:198px;top:668px;" width="20" height="20" viewBox="0 0 20 20"><path d="M4 2V18M8 2V18M12 8V18M16 8V18M1 6H18M1 12H18" stroke="#d8d8d8" stroke-width="1.2"/><path d="M2 17L17 2" stroke="#d8d8d8" stroke-width="1.8"/></svg>
<svg class="s" style="left:238px;top:668px;" width="20" height="20" viewBox="0 0 20 20"><circle cx="10" cy="10" r="8.6" fill="#d8d8d8"/><ellipse cx="9.1" cy="8.8" rx="6.6" ry="6.3" fill="#46607c"/></svg>
<svg class="s" style="left:280px;top:668px;" width="20" height="20" viewBox="0 0 20 20"><circle cx="7" cy="4" r="2.8" fill="#d8d8d8"/><path d="M10 8L17.5 12.5L10 17L2.5 12.5Z M6.2 10.2L13.8 14.8M13.8 10.2L6.2 14.8" fill="none" stroke="#d8d8d8" stroke-width="1.5"/></svg>
<svg class="s" style="left:320px;top:668px;" width="20" height="20" viewBox="0 0 20 20"><circle cx="8" cy="8" r="5.3" fill="none" stroke="#d8d8d8" stroke-width="1.5"/><path d="M12 12L16.5 16.5" stroke="#d8d8d8" stroke-width="2"/></svg>
<svg class="s" style="left:362px;top:668px;" width="20" height="20" viewBox="0 0 20 20"><path d="M10 3V17M3 10H17" stroke="#d8d8d8" stroke-width="1.3"/><circle cx="10" cy="10" r="2.3" fill="none" stroke="#d8d8d8" stroke-width="1.3"/><circle cx="10" cy="3" r="1.8" fill="#d8d8d8"/><circle cx="10" cy="17" r="1.8" fill="#d8d8d8"/><circle cx="3" cy="10" r="1.8" fill="#d8d8d8"/><circle cx="17" cy="10" r="1.8" fill="#d8d8d8"/></svg>
<svg class="s" style="left:402px;top:668px;" width="20" height="20" viewBox="0 0 20 20"><rect x="2" y="1" width="11" height="8" fill="#d8d8d8"/><path d="M13 4L18 1.5V8.5L13 6Z" fill="#d8d8d8"/><path d="M2.5 14Q10 7.5 17.5 14Q10 20.5 2.5 14Z" fill="#d8d8d8"/><circle cx="10" cy="14" r="2.4" fill="#585858"/></svg>
<div class="r" style="left:776px;top:668px;width:199px;height:26.5px;background:#161616;border-radius:5px;"></div>
<div class="r" style="left:783px;top:678px;width:20px;height:1px;background:#8a8a8a;"></div>
<div class="r" style="left:783px;top:682px;width:20px;height:1px;background:#8a8a8a;"></div>
<svg class="s" style="left:814px;top:674px;" width="8" height="11" viewBox="0 0 8 11"><path d="M0 0L8 5.5L0 11Z" fill="#7a7a7a"/></svg>
<svg class="s" style="left:831px;top:672px;" width="18" height="18" viewBox="0 0 18 18"><circle cx="9" cy="9" r="7.8" fill="none" stroke="#c8c8c8" stroke-width="1.5"/><path d="M13.2 4.8L7.6 7.6L4.8 13.2L10.4 10.4Z" fill="#c8c8c8"/><path d="M7.6 7.6L10.4 10.4" stroke="#161616" stroke-width="1"/></svg>
<div class="t" style="left:854.5px;top:673.69px;font-size:17.5px;color:#bcbcbc;letter-spacing:0.66px;">AI Navigation</div>
<svg class="s" style="left:12.5px;top:708.5px;" width="13" height="14" viewBox="0 0 13 14"><rect x="0" y="0" width="12.5" height="13.3" fill="#c8c8c8"/><path d="M1.2 2.8H10.4M1.2 5.5H11.5M1.2 8.1H10.4M1.2 10.7H11.5" stroke="#151515" stroke-width="1.3"/></svg>
<div class="t" style="left:31px;top:708.80px;font-size:15px;color:#c4c4c4;letter-spacing:0.3px;">Console</div>
<div class="r" style="left:109px;top:700px;width:94px;height:30px;background:#3c3c3c;border-radius:4px 4px 0 0;"></div>
<svg class="s" style="left:119.5px;top:712px;" width="19" height="10" viewBox="0 0 19 10"><path d="M4.5 0.5H14.5Q18.5 0.5 18.5 4.6Q18.5 8.8 15 8.8Q13.5 8.8 12.5 7.4H6.5Q5.5 8.8 4 8.8Q0.5 8.8 0.5 4.6Q0.5 0.5 4.5 0.5Z" fill="#c8c8c8"/><path d="M2.8 4.6H6.2M4.5 2.9V6.3" stroke="#3c3c3c" stroke-width="1.1"/><circle cx="12.8" cy="5.6" r="1" fill="#3c3c3c"/><circle cx="14.8" cy="3.6" r="1" fill="#3c3c3c"/></svg>
<div class="t" style="left:141px;top:708.80px;font-size:15px;color:#c4c4c4;letter-spacing:0.3px;">Game</div>
<svg class="s" style="left:954.5px;top:710px;" width="4" height="12" viewBox="0 0 4 12"><circle cx="2" cy="1.6" r="1.5" fill="#c4c4c4"/><circle cx="2" cy="6" r="1.5" fill="#c4c4c4"/><circle cx="2" cy="10.4" r="1.5" fill="#c4c4c4"/></svg>
<div class="r" style="left:0px;top:730px;width:974px;height:26px;background:#3c3c3c;"></div>
<div class="t" style="left:5px;top:735.80px;font-size:15px;color:#c4c4c4;letter-spacing:0.3px;">Game</div>
<svg class="s" style="left:98px;top:740px;" width="9" height="5.5" viewBox="0 0 9 5.5"><path d="M0 0H9L4.5 5.5Z" fill="#c4c4c4"/></svg>
<div class="r" style="left:113.5px;top:730px;width:1px;height:26px;background:#262626;"></div>
<div class="t" style="left:125px;top:735.80px;font-size:15px;color:#c4c4c4;letter-spacing:0.3px;">Display 1</div>
<svg class="s" style="left:204.5px;top:740px;" width="9.5" height="5.5" viewBox="0 0 9.5 5.5"><path d="M0 0H9.5L4.75 5.5Z" fill="#c4c4c4"/></svg>
<div class="r" style="left:220px;top:730px;width:1px;height:26px;background:#262626;"></div>
<div class="t" style="left:225px;top:735.80px;font-size:15px;color:#c4c4c4;letter-spacing:0.35px;">Free Aspect</div>
<svg class="s" style="left:404.5px;top:740px;" width="9.5" height="5.5" viewBox="0 0 9.5 5.5"><path d="M0 0H9.5L4.75 5.5Z" fill="#c4c4c4"/></svg>
<div class="r" style="left:420px;top:730px;width:1px;height:26px;background:#262626;"></div>
<div class="t" style="left:429px;top:735.80px;font-size:15px;color:#c4c4c4;letter-spacing:0.3px;">Scale</div>
<div class="r" style="left:480px;top:742px;width:62px;height:2px;background:#5a5a5a;"></div>
<svg class="s" style="left:474px;top:737px;" width="12" height="12" viewBox="0 0 12 12"><circle cx="6" cy="6" r="5.6" fill="#9c9c9c"/></svg>
<div class="t" style="left:550px;top:735.80px;font-size:15px;color:#c4c4c4;letter-spacing:0.3px;">1.3x</div>
<div class="r" style="left:601.5px;top:730px;width:1px;height:26px;background:#262626;"></div>
<div class="t" style="left:606px;top:735.80px;font-size:15px;color:#c4c4c4;letter-spacing:0.35px;">Play Focused</div>
<svg class="s" style="left:724px;top:740px;" width="9.5" height="5.5" viewBox="0 0 9.5 5.5"><path d="M0 0H9.5L4.75 5.5Z" fill="#c4c4c4"/></svg>
<div class="r" style="left:740.5px;top:730px;width:1px;height:26px;background:#262626;"></div>
<svg class="s" style="left:744px;top:733px;" width="22" height="20" viewBox="0 0 22 20"><path d="M11 3.2Q15.5 3.2 16.8 9Q17.5 14 16 16.5Q14 19 11 19Q8 19 6 16.5Q4.5 14 5.2 9Q6.5 3.2 11 3.2Z" fill="#c8c8c8"/><g stroke="#c8c8c8" stroke-width="1.5" stroke-linecap="round" fill="none"><path d="M8.6 4.4L6.6 1.8M13.4 4.4L15.4 1.8M6 8.2L4.4 4.8M16 8.2L17.6 4.8M5.2 12.2H2.6V13.8M16.8 12.2H19.4V13.8M6.4 16.2L4.8 18.8M15.6 16.2L17.2 18.8"/></g></svg>
<div class="r" style="left:771px;top:730px;width:1px;height:26px;background:#262626;"></div>
<svg class="s" style="left:779px;top:736px;" width="17" height="14" viewBox="0 0 17 14"><rect x="0.6" y="3.2" width="2.6" height="6.4" fill="#d0d0d0"/><path d="M4 3.2L8.6 0.6V12.6L4 9.6Z" fill="#d0d0d0"/><path d="M10.2 4.8Q11.5 6.6 10.2 8.4M12.4 2.4Q15 6.6 12.4 10.8" fill="none" stroke="#d0d0d0" stroke-width="1.3"/></svg>
<div class="r" style="left:804.5px;top:730px;width:1px;height:26px;background:#262626;"></div>
<svg class="s" style="left:811px;top:737px;" width="18" height="12" viewBox="0 0 18 12"><rect x="0.3" y="0.2" width="17.6" height="11.6" rx="1.2" fill="#c8c8c8"/><rect x="2.4" y="1.6" width="2.2" height="2" rx="0.6" fill="#3c3c3c"/><rect x="2.4" y="5" width="2.2" height="1.8" rx="0.6" fill="#3c3c3c"/><rect x="6.2" y="1.6" width="2.2" height="2" rx="0.6" fill="#3c3c3c"/><rect x="6.2" y="5" width="2.2" height="1.8" rx="0.6" fill="#3c3c3c"/><rect x="10.0" y="1.6" width="2.2" height="2" rx="0.6" fill="#3c3c3c"/><rect x="10.0" y="5" width="2.2" height="1.8" rx="0.6" fill="#3c3c3c"/><rect x="13.8" y="1.6" width="2.2" height="2" rx="0.6" fill="#3c3c3c"/><rect x="13.8" y="5" width="2.2" height="1.8" rx="0.6" fill="#3c3c3c"/><rect x="2.4" y="8.2" width="2" height="2" rx="0.6" fill="#3c3c3c"/><rect x="5.6" y="8.3" width="6.8" height="1.8" rx="0.8" fill="#3c3c3c"/><rect x="13.8" y="8.2" width="2.2" height="2" rx="0.6" fill="#3c3c3c"/></svg>
<div class="r" style="left:836.5px;top:730px;width:1px;height:26px;background:#262626;"></div>
<div class="t" style="left:843px;top:735.80px;font-size:15px;color:#c4c4c4;letter-spacing:0.3px;">Stats</div>
<div class="r" style="left:886px;top:730px;width:1px;height:26px;background:#262626;"></div>
<div class="t" style="left:891px;top:735.80px;font-size:15px;color:#c4c4c4;letter-spacing:0.3px;">Gizmos</div>
<div class="r" style="left:951px;top:730px;width:1px;height:26px;background:#262626;"></div>
<svg class="s" style="left:957.5px;top:740px;" width="9.5" height="5.5" viewBox="0 0 9.5 5.5"><path d="M0 0H9.5L4.75 5.5Z" fill="#c4c4c4"/></svg>
<div class="r" style="left:0px;top:756px;width:974px;height:1px;background:#232323;"></div>
<svg class="s" style="left:0px;top:757px;overflow:hidden;" width="974" height="355" viewBox="0 0 974 355"><defs>
<linearGradient id="sky" x1="0" y1="0" x2="0" y2="355" gradientUnits="userSpaceOnUse">
<stop offset="0" stop-color="#9da5b6"/>
<stop offset="0.2" stop-color="#a2abbd"/>
<stop offset="0.3" stop-color="#aab6ca"/>
<stop offset="0.4" stop-color="#b8c6db"/>
<stop offset="0.45" stop-color="#cbdae6"/>
<stop offset="0.48" stop-color="#dae8ec"/>
<stop offset="0.505" stop-color="#edf2f1"/>
<stop offset="1" stop-color="#edf2f1"/>
</linearGradient>
<linearGradient id="gnd" x1="0" y1="180" x2="0" y2="355" gradientUnits="userSpaceOnUse">
<stop offset="0" stop-color="#a6a5a3"/>
<stop offset="0.15" stop-color="#a19e9c"/>
<stop offset="1" stop-color="#a09d9a"/>
</linearGradient>
<filter id="hb" x="-5%" y="-20%" width="110%" height="140%"><feGaussianBlur stdDeviation="0 6"/></filter>
</defs>
<rect x="0" y="0" width="974" height="355" fill="url(#sky)"/>
<path d="M-20 200Q487 179 994 199V370H-20Z" fill="url(#gnd)" filter="url(#hb)"/>
<rect x="0" y="0" width="2" height="355" fill="#7f9fcf" opacity="0.7"/><rect x="0" y="0" width="974" height="1.5" fill="#7090c0" opacity="0.75"/>
<rect x="971" y="0" width="3" height="355" fill="#7d94b4" opacity="0.6"/>
</svg>
<div class="r" style="left:754.5px;top:778px;width:196px;height:35px;background:#f2f2f2;border:1px solid #8a8a8a;border-radius:3px;box-sizing:border-box;"></div>
<div class="r" style="left:754.5px;top:818px;width:196px;height:35px;background:#f2f2f2;border:1px solid #8a8a8a;border-radius:3px;box-sizing:border-box;"></div>
<div class="t" style="left:787px;top:781.96px;font-size:28.4px;color:#333333;letter-spacing:0.55px;">Start Host</div>
<div class="t" style="left:779.5px;top:822.16px;font-size:28.4px;color:#333333;letter-spacing:0.5px;">Start Client</div>
<div class="r" style="left:0px;top:1112px;width:974px;height:1px;background:#151515;"></div>
<div class="r" style="left:0px;top:1113px;width:1919px;height:27px;background:#151515;"></div>
<div class="r" style="left:1821px;top:1114px;width:1px;height:25px;background:#2a2a2a;"></div>
<div class="r" style="left:1854px;top:1114px;width:1px;height:25px;background:#2a2a2a;"></div>
<div class="r" style="left:1887px;top:1114px;width:1px;height:25px;background:#2a2a2a;"></div>
<svg class="s" style="left:1828px;top:1119px;" width="18" height="18" viewBox="0 0 18 18"><ellipse cx="9" cy="10.5" rx="5.2" ry="6.2" fill="#c4c4c4"/><ellipse cx="9" cy="4.8" rx="3" ry="2.2" fill="#c4c4c4"/><path d="M2 8L4 9.5M16 8L14 9.5M1.5 12.5H4M16.5 12.5H14M2.5 16.5L4.5 14.5M15.5 16.5L13.5 14.5" stroke="#c4c4c4" stroke-width="1.3"/><path d="M1.5 1L16.5 17" stroke="#151515" stroke-width="2.6"/><path d="M1.5 1L16.5 17" stroke="#c4c4c4" stroke-width="1.2"/></svg>
<svg class="s" style="left:1862px;top:1119px;" width="18" height="18" viewBox="0 0 18 18"><ellipse cx="9" cy="3.5" rx="6.5" ry="2.6" fill="#c4c4c4"/><path d="M2.5 5.5V8Q9 11.5 15.5 8V5.5Q9 9 2.5 5.5Z M2.5 9.5V12Q9 15.5 15.5 12V9.5Q9 13 2.5 9.5Z M2.5 13.5V15Q9 18.5 15.5 15V13.5Q9 17 2.5 13.5Z" fill="#c4c4c4"/><path d="M1 1L17 17" stroke="#151515" stroke-width="2.6"/><path d="M1 1L17 17" stroke="#c4c4c4" stroke-width="1.2"/></svg>
<svg class="s" style="left:1893px;top:1119px;" width="18" height="18" viewBox="0 0 18 18"><circle cx="9" cy="9" r="8" fill="none" stroke="#c4c4c4" stroke-width="1.3"/><path d="M5 9.3L7.8 12L13 6.5" fill="none" stroke="#c4c4c4" stroke-width="1.6"/></svg>
<div class="r" style="left:980px;top:99px;width:120px;height:31px;background:#3c3c3c;border-radius:4px 4px 0 0;"></div>
<div class="r" style="left:980px;top:99px;width:120px;height:2.5px;background:#2e5f90;border-radius:4px 4px 0 0;"></div>
<svg class="s" style="left:992px;top:107px;" width="15" height="14" viewBox="0 0 15 14"><path d="M0.8 3.6L3.4 1.8V5.4Z" fill="#d0d0d0"/><path d="M3.4 3.6H14.2" stroke="#d0d0d0" stroke-width="1.5"/><rect x="4.2" y="6.4" width="2.4" height="2.6" fill="#d0d0d0"/><path d="M7.8 7.6H14.2" stroke="#d0d0d0" stroke-width="1.5"/><rect x="4.2" y="10.2" width="2.4" height="2.6" fill="#d0d0d0"/><path d="M7.8 11.4H14.2" stroke="#d0d0d0" stroke-width="1.5"/></svg>
<div class="t" style="left:1011.5px;top:108.30px;font-size:15px;color:#c4c4c4;letter-spacing:0.35px;">Hierarchy</div>
<svg class="s" style="left:1421.5px;top:108px;" width="11" height="12" viewBox="0 0 11 12"><rect x="0.9" y="6.6" width="9.2" height="5.2" rx="0.8" fill="none" stroke="#c4c4c4" stroke-width="1.3"/><path d="M2.7 1.9Q4.5 0.2 6.5 0.6Q8.8 1 8.8 3.2V6.6" fill="none" stroke="#c4c4c4" stroke-width="1.3"/></svg>
<svg class="s" style="left:1446.5px;top:108px;" width="4" height="12" viewBox="0 0 4 12"><circle cx="2" cy="1.6" r="1.5" fill="#c4c4c4"/><circle cx="2" cy="6" r="1.5" fill="#c4c4c4"/><circle cx="2" cy="10.4" r="1.5" fill="#c4c4c4"/></svg>
<div class="r" style="left:980px;top:129px;width:485px;height:569px;background:#383838;"></div>
<div class="r" style="left:980px;top:129px;width:485px;height:25px;background:#3c3c3c;"></div>
<div class="r" style="left:980px;top:154px;width:485px;height:1px;background:#2a2a2a;"></div>
<svg class="s" style="left:988px;top:135px;" width="16" height="16" viewBox="0 0 16 16"><path d="M8 1V15M1 8H15" stroke="#d4d4d4" stroke-width="1.6"/></svg>
<svg class="s" style="left:1008.5px;top:140px;" width="10" height="6" viewBox="0 0 10 6"><path d="M0 0H10L5.0 6Z" fill="#c4c4c4"/></svg>
<div class="r" style="left:1054px;top:132px;width:407px;height:20px;background:#2a2a2a;border-radius:4px;border:1px solid #212121;box-sizing:border-box;"></div>
<svg class="s" style="left:1059px;top:137px;" width="13" height="10" viewBox="0 0 13 10"><circle cx="3.6" cy="3.6" r="2.6" fill="none" stroke="#b4b4b4" stroke-width="1.4"/><path d="M5.6 5.6L8.6 8.6" stroke="#b4b4b4" stroke-width="1.6"/><path d="M9 3L10.6 4.6L12.2 3" fill="none" stroke="#b4b4b4" stroke-width="1"/></svg>
<div class="t" style="left:1077.5px;top:134.80px;font-size:15px;color:#8a8a8a;letter-spacing:0.3px;">All</div>
<div class="r" style="left:1439px;top:133px;width:21px;height:18px;background:#3a3a3a;border-radius:0 3px 3px 0;"></div>
<svg class="s" style="left:1441px;top:134px;" width="17" height="17" viewBox="0 0 17 17"><rect x="4.3" y="1.3" width="11.4" height="11.4" fill="none" stroke="#c4c4c4" stroke-width="1.2"/><rect x="2" y="10" width="5.6" height="5.2" fill="#3a3a3a" stroke="#c4c4c4" stroke-width="1.2"/><path d="M6.8 10.6L12.2 5" stroke="#c4c4c4" stroke-width="1.4"/><path d="M13.4 3.6L8.6 4.6L12.4 8.4Z" fill="#c4c4c4"/></svg>
<div class="r" style="left:980px;top:174px;width:40px;height:524px;background:#333333;"></div>
<div class="r" style="left:980px;top:154px;width:485px;height:20px;background:#2e2e2e;"></div>
<svg class="s" style="left:1022px;top:160px;" width="11" height="8" viewBox="0 0 11 8"><path d="M0 0H11L5.5 8Z" fill="#8e8e8e"/></svg>
<svg class="s" style="left:1035px;top:153px;" width="24" height="24" viewBox="0 0 24 24"><g transform="scale(1.0)" fill="none" stroke="#ececec" stroke-width="2.4" stroke-linejoin="miter" stroke-linecap="butt">
<path d="M5 14V7L10.4 3.9"/><path d="M19 14V7L13.6 3.9"/><path d="M5 7L12 10.8L19 7"/><path d="M12 10.8V20.5"/><path d="M6.2 16.4L12 20.5L17.8 16.4"/>
</g></svg>
<div class="t" style="left:1061px;top:156.80px;font-size:15px;color:#e4e4e4;font-weight:bold;letter-spacing:0.3px;">Main*</div>
<svg class="s" style="left:1447px;top:158px;" width="4" height="12" viewBox="0 0 4 12"><circle cx="2" cy="1.6" r="1.5" fill="#c4c4c4"/><circle cx="2" cy="6" r="1.5" fill="#c4c4c4"/><circle cx="2" cy="10.4" r="1.5" fill="#c4c4c4"/></svg>
<div class="r" style="left:980px;top:174px;width:485px;height:1px;background:#2a2a2a;opacity:0.5;"></div>
<svg class="s" style="left:1056px;top:175.5px;" width="17" height="17" viewBox="0 0 17 17"><path d="M8.5 1L15.7 4.8V12.2L8.5 16L1.3 12.2V4.8Z M1.3 4.8L8.5 8.6L15.7 4.8M8.5 8.6V16" fill="none" stroke="#c0c0c0" stroke-width="1.3" stroke-linejoin="round"/></svg>
<div class="t" style="left:1077.5px;top:176.80px;font-size:15px;color:#c4c4c4;letter-spacing:0.3px;">Main Camera</div>
<svg class="s" style="left:1056px;top:195.5px;" width="17" height="17" viewBox="0 0 17 17"><path d="M8.5 1L15.7 4.8V12.2L8.5 16L1.3 12.2V4.8Z M1.3 4.8L8.5 8.6L15.7 4.8M8.5 8.6V16" fill="none" stroke="#c0c0c0" stroke-width="1.3" stroke-linejoin="round"/></svg>
<div class="t" style="left:1077.5px;top:196.80px;font-size:15px;color:#c4c4c4;letter-spacing:0.3px;">Directional Light</div>
<svg class="s" style="left:1056px;top:215.5px;" width="17" height="17" viewBox="0 0 17 17"><path d="M8.5 1L15.7 4.8V12.2L8.5 16L1.3 12.2V4.8Z M1.3 4.8L8.5 8.6L15.7 4.8M8.5 8.6V16" fill="none" stroke="#c0c0c0" stroke-width="1.3" stroke-linejoin="round"/></svg>
<div class="t" style="left:1077.5px;top:216.80px;font-size:15px;color:#c4c4c4;letter-spacing:0.3px;">NetworkManager</div>
<svg class="s" style="left:1056px;top:235.5px;" width="17" height="17" viewBox="0 0 17 17"><path d="M8.5 1L15.7 4.8V12.2L8.5 16L1.3 12.2V4.8Z M1.3 4.8L8.5 8.6L15.7 4.8M8.5 8.6V16" fill="none" stroke="#c0c0c0" stroke-width="1.3" stroke-linejoin="round"/></svg>
<div class="t" style="left:1077.5px;top:236.80px;font-size:15px;color:#c4c4c4;letter-spacing:0.3px;">ConnectPanel</div>
<svg class="s" style="left:1041px;top:239px;" width="8" height="10" viewBox="0 0 8 10"><path d="M0 0L8 5L0 10Z" fill="#8e8e8e"/></svg>
<svg class="s" style="left:1056px;top:255.5px;" width="17" height="17" viewBox="0 0 17 17"><path d="M8.5 1L15.7 4.8V12.2L8.5 16L1.3 12.2V4.8Z M1.3 4.8L8.5 8.6L15.7 4.8M8.5 8.6V16" fill="none" stroke="#c0c0c0" stroke-width="1.3" stroke-linejoin="round"/></svg>
<div class="t" style="left:1077.5px;top:256.80px;font-size:15px;color:#c4c4c4;letter-spacing:0.3px;">EventSystem</div>
<svg class="s" style="left:1056px;top:275.5px;" width="17" height="17" viewBox="0 0 17 17"><path d="M8.5 1L15.7 4.8V12.2L8.5 16L1.3 12.2V4.8Z M1.3 4.8L8.5 8.6L15.7 4.8M8.5 8.6V16" fill="none" stroke="#c0c0c0" stroke-width="1.3" stroke-linejoin="round"/></svg>
<div class="t" style="left:1077.5px;top:276.80px;font-size:15px;color:#c4c4c4;letter-spacing:0.3px;">RespawnPoints</div>
<svg class="s" style="left:1039.5px;top:280px;" width="11" height="8" viewBox="0 0 11 8"><path d="M0 0H11L5.5 8Z" fill="#8e8e8e"/></svg>
<svg class="s" style="left:1073px;top:295.5px;" width="17" height="17" viewBox="0 0 17 17"><path d="M8.5 1L15.7 4.8V12.2L8.5 16L1.3 12.2V4.8Z M1.3 4.8L8.5 8.6L15.7 4.8M8.5 8.6V16" fill="none" stroke="#c0c0c0" stroke-width="1.3" stroke-linejoin="round"/></svg>
<div class="t" style="left:1094.5px;top:296.80px;font-size:15px;color:#c4c4c4;letter-spacing:0.3px;">Respawn_1</div>
<svg class="s" style="left:1073px;top:315.5px;" width="17" height="17" viewBox="0 0 17 17"><path d="M8.5 1L15.7 4.8V12.2L8.5 16L1.3 12.2V4.8Z M1.3 4.8L8.5 8.6L15.7 4.8M8.5 8.6V16" fill="none" stroke="#c0c0c0" stroke-width="1.3" stroke-linejoin="round"/></svg>
<div class="t" style="left:1094.5px;top:316.80px;font-size:15px;color:#c4c4c4;letter-spacing:0.3px;">Respawn_2</div>
<svg class="s" style="left:1073px;top:335.5px;" width="17" height="17" viewBox="0 0 17 17"><path d="M8.5 1L15.7 4.8V12.2L8.5 16L1.3 12.2V4.8Z M1.3 4.8L8.5 8.6L15.7 4.8M8.5 8.6V16" fill="none" stroke="#c0c0c0" stroke-width="1.3" stroke-linejoin="round"/></svg>
<div class="t" style="left:1094.5px;top:336.80px;font-size:15px;color:#c4c4c4;letter-spacing:0.3px;">Respawn_3</div>
<svg class="s" style="left:1073px;top:355.5px;" width="17" height="17" viewBox="0 0 17 17"><path d="M8.5 1L15.7 4.8V12.2L8.5 16L1.3 12.2V4.8Z M1.3 4.8L8.5 8.6L15.7 4.8M8.5 8.6V16" fill="none" stroke="#c0c0c0" stroke-width="1.3" stroke-linejoin="round"/></svg>
<div class="t" style="left:1094.5px;top:356.80px;font-size:15px;color:#c4c4c4;letter-spacing:0.3px;">Respawn_4</div>
<div class="r" style="left:1467px;top:99px;width:119px;height:31px;background:#3c3c3c;border-radius:4px 4px 0 0;"></div>
<svg class="s" style="left:1480px;top:107px;" width="13" height="13" viewBox="0 0 13 13"><circle cx="6.5" cy="6.5" r="6.5" fill="#c4c4c4"/><rect x="5.6" y="5.4" width="1.9" height="5" fill="#3c3c3c"/><circle cx="6.5" cy="3.4" r="1.1" fill="#3c3c3c"/></svg>
<div class="t" style="left:1499px;top:108.30px;font-size:15px;color:#c4c4c4;letter-spacing:0.35px;">Inspector</div>
<svg class="s" style="left:1875.5px;top:108px;" width="11" height="12" viewBox="0 0 11 12"><rect x="0.9" y="6.6" width="9.2" height="5.2" rx="0.8" fill="none" stroke="#c4c4c4" stroke-width="1.3"/><path d="M2.7 1.9Q4.5 0.2 6.5 0.6Q8.8 1 8.8 3.2V6.6" fill="none" stroke="#c4c4c4" stroke-width="1.3"/></svg>
<svg class="s" style="left:1900px;top:108px;" width="4" height="12" viewBox="0 0 4 12"><circle cx="2" cy="1.6" r="1.5" fill="#c4c4c4"/><circle cx="2" cy="6" r="1.5" fill="#c4c4c4"/><circle cx="2" cy="10.4" r="1.5" fill="#c4c4c4"/></svg>
<div class="r" style="left:1467px;top:129px;width:452px;height:984px;background:#383838;"></div>
<div class="r" style="left:976px;top:700px;width:102px;height:30px;background:#3c3c3c;border-radius:4px 4px 0 0;"></div>
<svg class="s" style="left:988px;top:709px;" width="16" height="13" viewBox="0 0 16 13"><path d="M0 1.5Q0 0 1.5 0H6L7.5 2H14.5Q16 2 16 3.5V11.5Q16 13 14.5 13H1.5Q0 13 0 11.5Z" fill="#c4c4c4"/></svg>
<div class="t" style="left:1008.5px;top:709.30px;font-size:15px;color:#c4c4c4;letter-spacing:0.3px;">Project</div>
<div class="r" style="left:976px;top:730px;width:491px;height:383px;background:#383838;"></div>
<div class="r" style="left:976px;top:730px;width:491px;height:25px;background:#3c3c3c;"></div>
<div class="r" style="left:976px;top:755px;width:491px;height:1px;background:#2a2a2a;"></div>
<svg class="s" style="left:984px;top:735px;" width="16" height="16" viewBox="0 0 16 16"><path d="M8 1V15M1 8H15" stroke="#d4d4d4" stroke-width="1.6"/></svg>
<svg class="s" style="left:1004px;top:740px;" width="10" height="6" viewBox="0 0 10 6"><path d="M0 0H10L5.0 6Z" fill="#c4c4c4"/></svg>
<div class="r" style="left:1032px;top:734px;width:200px;height:20px;background:#2a2a2a;border-radius:4px;border:1px solid #212121;box-sizing:border-box;"></div>
<svg class="s" style="left:1038px;top:739px;" width="10" height="10" viewBox="0 0 10 10"><circle cx="3.8" cy="3.8" r="2.8" fill="none" stroke="#b4b4b4" stroke-width="1.4"/><path d="M6 6L9 9" stroke="#b4b4b4" stroke-width="1.6"/></svg>
<svg class="s" style="left:981px;top:761px;" width="10" height="9" viewBox="0 0 10 9"><path d="M0 0H10L5 9Z" fill="#7e7e7e"/></svg>
<svg class="s" style="left:998px;top:757px;" width="16" height="15" viewBox="0 0 16 15"><path d="M8 0.5L10.2 5.5L15.5 5.8L11.4 9.3L12.8 14.5L8 11.6L3.2 14.5L4.6 9.3L0.5 5.8L5.8 5.5Z" fill="#c4c4c4"/></svg>
<div class="t" style="left:1020.5px;top:757.80px;font-size:15px;color:#d8d8d8;font-weight:bold;letter-spacing:0.2px;">Favorites</div>
<svg class="s" style="left:1016px;top:777px;" width="15" height="15" viewBox="0 0 15 15"><circle cx="6" cy="6" r="4.8" fill="none" stroke="#c4c4c4" stroke-width="1.5"/><path d="M9.5 9.5L14 14" stroke="#c4c4c4" stroke-width="1.8"/></svg>
<div class="t" style="left:1036px;top:777.80px;font-size:15px;color:#c4c4c4;letter-spacing:0.3px;width:61px;overflow:hidden;">All Materials</div>
<svg class="s" style="left:1016px;top:797px;" width="15" height="15" viewBox="0 0 15 15"><circle cx="6" cy="6" r="4.8" fill="none" stroke="#c4c4c4" stroke-width="1.5"/><path d="M9.5 9.5L14 14" stroke="#c4c4c4" stroke-width="1.8"/></svg>
<div class="t" style="left:1036px;top:797.80px;font-size:15px;color:#c4c4c4;letter-spacing:0.3px;width:61px;overflow:hidden;">All Models</div>
<svg class="s" style="left:1016px;top:817px;" width="15" height="15" viewBox="0 0 15 15"><circle cx="6" cy="6" r="4.8" fill="none" stroke="#c4c4c4" stroke-width="1.5"/><path d="M9.5 9.5L14 14" stroke="#c4c4c4" stroke-width="1.8"/></svg>
<div class="t" style="left:1036px;top:817.80px;font-size:15px;color:#c4c4c4;letter-spacing:0.3px;width:61px;overflow:hidden;">All Prefabs</div>
<div class="r" style="left:976px;top:855px;width:491px;height:19px;background:#4a4a4a;"></div>
<svg class="s" style="left:981px;top:860px;" width="10" height="9" viewBox="0 0 10 9"><path d="M0 0H10L5 9Z" fill="#8e8e8e"/></svg>
<svg class="s" style="left:998px;top:857px;" width="17" height="14" viewBox="0 0 17 14"><path d="M0 1.2Q0 0 1.2 0H5.5L7 1.8H13.5Q14.7 1.8 14.7 3V5H3.5L0 13Z" fill="#c4c4c4"/><path d="M3.8 6H16.5L13 13.5H0.5Z" fill="#c4c4c4"/></svg>
<div class="t" style="left:1020.5px;top:856.80px;font-size:15px;color:#d8d8d8;font-weight:bold;letter-spacing:0.2px;">Assets</div>
<svg class="s" style="left:1016px;top:877.5px;" width="15" height="13" viewBox="0 0 15 13"><path d="M0 1.2Q0 0 1.2 0H5.5L7 1.8H13.8Q15 1.8 15 3V11.8Q15 13 13.8 13H1.2Q0 13 0 11.8Z" fill="#c4c4c4"/></svg>
<div class="t" style="left:1036px;top:876.80px;font-size:15px;color:#c4c4c4;letter-spacing:0.3px;width:61px;overflow:hidden;">Material</div>
<svg class="s" style="left:1016px;top:897.5px;" width="15" height="13" viewBox="0 0 15 13"><path d="M0 1.2Q0 0 1.2 0H5.5L7 1.8H13.8Q15 1.8 15 3V11.8Q15 13 13.8 13H1.2Q0 13 0 11.8Z" fill="#c4c4c4"/></svg>
<div class="t" style="left:1036px;top:896.80px;font-size:15px;color:#c4c4c4;letter-spacing:0.3px;width:61px;overflow:hidden;">Prefabs</div>
<svg class="s" style="left:1016px;top:917.5px;" width="15" height="13" viewBox="0 0 15 13"><path d="M0 1.2Q0 0 1.2 0H5.5L7 1.8H13.8Q15 1.8 15 3V11.8Q15 13 13.8 13H1.2Q0 13 0 11.8Z" fill="#c4c4c4"/></svg>
<div class="t" style="left:1036px;top:916.80px;font-size:15px;color:#c4c4c4;letter-spacing:0.3px;width:61px;overflow:hidden;">Scenes</div>
<svg class="s" style="left:1016px;top:937.5px;" width="15" height="13" viewBox="0 0 15 13"><path d="M0 1.2Q0 0 1.2 0H5.5L7 1.8H13.8Q15 1.8 15 3V11.8Q15 13 13.8 13H1.2Q0 13 0 11.8Z" fill="#c4c4c4"/></svg>
<div class="t" style="left:1036px;top:936.80px;font-size:15px;color:#c4c4c4;letter-spacing:0.3px;width:61px;overflow:hidden;">Scripts</div>
<svg class="s" style="left:1016px;top:957.5px;" width="15" height="13" viewBox="0 0 15 13"><path d="M0 1.2Q0 0 1.2 0H5.5L7 1.8H13.8Q15 1.8 15 3V11.8Q15 13 13.8 13H1.2Q0 13 0 11.8Z" fill="#c4c4c4"/></svg>
<div class="t" style="left:1036px;top:956.80px;font-size:15px;color:#c4c4c4;letter-spacing:0.3px;width:61px;overflow:hidden;">Settings</div>
<svg class="s" style="left:1016px;top:977.5px;" width="15" height="13" viewBox="0 0 15 13"><path d="M0 1.2Q0 0 1.2 0H5.5L7 1.8H13.8Q15 1.8 15 3V11.8Q15 13 13.8 13H1.2Q0 13 0 11.8Z" fill="#c4c4c4"/></svg>
<div class="t" style="left:1036px;top:976.80px;font-size:15px;color:#c4c4c4;letter-spacing:0.3px;width:61px;overflow:hidden;">TextMesh Pro</div>
<svg class="s" style="left:1000px;top:979px;" width="8" height="10" viewBox="0 0 8 10"><path d="M0 0L8 5L0 10Z" fill="#7e7e7e"/></svg>
<svg class="s" style="left:1016px;top:997.5px;" width="15" height="13" viewBox="0 0 15 13"><path d="M0 1.2Q0 0 1.2 0H5.5L7 1.8H13.8Q15 1.8 15 3V11.8Q15 13 13.8 13H1.2Q0 13 0 11.8Z" fill="#c4c4c4"/></svg>
<div class="t" style="left:1036px;top:996.80px;font-size:15px;color:#c4c4c4;letter-spacing:0.3px;width:61px;overflow:hidden;">TutorialInfo</div>
<svg class="s" style="left:1000px;top:999px;" width="8" height="10" viewBox="0 0 8 10"><path d="M0 0L8 5L0 10Z" fill="#7e7e7e"/></svg>
<svg class="s" style="left:982px;top:1019px;" width="8" height="10" viewBox="0 0 8 10"><path d="M0 0L8 5L0 10Z" fill="#7e7e7e"/></svg>
<svg class="s" style="left:998px;top:1017.5px;" width="15" height="13" viewBox="0 0 15 13"><path d="M0 1.2Q0 0 1.2 0H5.5L7 1.8H13.8Q15 1.8 15 3V11.8Q15 13 13.8 13H1.2Q0 13 0 11.8Z" fill="#c4c4c4"/></svg>
<div class="t" style="left:1020.5px;top:1016.80px;font-size:15px;color:#d8d8d8;font-weight:bold;letter-spacing:0.2px;">Packages</div>
<div class="r" style="left:1097px;top:388px;width:406px;height:752px;background:#f9f9f9;border-radius:5px 5px 4px 4px;box-shadow:0 0 0 1px rgba(0,0,0,0.12),0 2px 8px rgba(0,0,0,0.3);"></div>
<div class="t" style="left:1142px;top:398.13px;font-size:14.5px;color:#9d9d9d;letter-spacing:0.05px;">Cut</div>
<div class="t" style="right:448px;top:398.13px;font-size:14.5px;color:#9d9d9d;letter-spacing:0.35px;">Ctrl+X</div>
<div class="t" style="left:1142px;top:424.43px;font-size:14.5px;color:#9d9d9d;letter-spacing:0.05px;">Copy</div>
<div class="t" style="right:448px;top:424.43px;font-size:14.5px;color:#9d9d9d;letter-spacing:0.35px;">Ctrl+C</div>
<div class="t" style="left:1142px;top:450.43px;font-size:14.5px;color:#9d9d9d;letter-spacing:0.05px;">Paste</div>
<div class="t" style="right:448px;top:450.43px;font-size:14.5px;color:#9d9d9d;letter-spacing:0.35px;">Ctrl+V</div>
<div class="t" style="left:1142px;top:476.33px;font-size:14.5px;color:#9d9d9d;letter-spacing:0.05px;">Paste Special</div>
<div class="t" style="left:1142px;top:502.23px;font-size:14.5px;color:#9d9d9d;letter-spacing:0.05px;">Rename</div>
<div class="t" style="left:1142px;top:528.53px;font-size:14.5px;color:#9d9d9d;letter-spacing:0.05px;">Duplicate</div>
<div class="t" style="right:448px;top:528.53px;font-size:14.5px;color:#9d9d9d;letter-spacing:0.35px;">Ctrl+D</div>
<div class="t" style="left:1142px;top:554.13px;font-size:14.5px;color:#9d9d9d;letter-spacing:0.05px;">Delete</div>
<div class="t" style="right:448px;top:554.13px;font-size:14.5px;color:#9d9d9d;letter-spacing:0.35px;">Del</div>
<div class="r" style="left:1108px;top:578px;width:384px;height:1px;background:#d9d9d9;"></div>
<div class="t" style="left:1142px;top:590.93px;font-size:14.5px;color:#050505;letter-spacing:0.05px;">Select All</div>
<div class="t" style="left:1142px;top:617.23px;font-size:14.5px;color:#9d9d9d;letter-spacing:0.05px;">Deselect All</div>
<div class="t" style="left:1142px;top:643.53px;font-size:14.5px;color:#9d9d9d;letter-spacing:0.05px;">Invert Selection</div>
<div class="t" style="left:1142px;top:669.43px;font-size:14.5px;color:#9d9d9d;letter-spacing:0.05px;">Select Children</div>
<div class="r" style="left:1108px;top:693px;width:384px;height:1px;background:#d9d9d9;"></div>
<div class="t" style="left:1142px;top:705.93px;font-size:14.5px;color:#9d9d9d;letter-spacing:0.05px;">Find References in Scene</div>
<div class="r" style="left:1108px;top:730px;width:384px;height:1px;background:#d9d9d9;"></div>
<div class="t" style="left:1142px;top:742.63px;font-size:14.5px;color:#9d9d9d;letter-spacing:0.05px;">Set as Default Parent</div>
<div class="r" style="left:1108px;top:767px;width:384px;height:1px;background:#d9d9d9;"></div>
<div class="r" style="left:1104px;top:773px;width:392px;height:26px;background:#ededed;border-radius:4px;"></div>
<div class="t" style="left:1142px;top:780.13px;font-size:14.5px;color:#050505;letter-spacing:0.05px;">Create Empty</div>
<div class="t" style="right:448px;top:780.13px;font-size:14.5px;color:#050505;letter-spacing:0.35px;">Ctrl+Shift+N</div>
<div class="t" style="left:1142px;top:806.13px;font-size:14.5px;color:#050505;letter-spacing:0.05px;">2D Object</div>
<svg class="s" style="left:1476.5px;top:807.5px;" width="8" height="10" viewBox="0 0 8 10"><path d="M1 0.8L6 5L1 9.2" fill="none" stroke="#222" stroke-width="1.3"/></svg>
<div class="t" style="left:1142px;top:832.13px;font-size:14.5px;color:#050505;letter-spacing:0.05px;">3D Object</div>
<svg class="s" style="left:1476.5px;top:833.5px;" width="8" height="10" viewBox="0 0 8 10"><path d="M1 0.8L6 5L1 9.2" fill="none" stroke="#222" stroke-width="1.3"/></svg>
<div class="t" style="left:1142px;top:858.13px;font-size:14.5px;color:#050505;letter-spacing:0.05px;">Effects</div>
<svg class="s" style="left:1476.5px;top:859.5px;" width="8" height="10" viewBox="0 0 8 10"><path d="M1 0.8L6 5L1 9.2" fill="none" stroke="#222" stroke-width="1.3"/></svg>
<div class="t" style="left:1142px;top:884.13px;font-size:14.5px;color:#050505;letter-spacing:0.05px;">Light</div>
<svg class="s" style="left:1476.5px;top:885.5px;" width="8" height="10" viewBox="0 0 8 10"><path d="M1 0.8L6 5L1 9.2" fill="none" stroke="#222" stroke-width="1.3"/></svg>
<div class="t" style="left:1142px;top:910.13px;font-size:14.5px;color:#050505;letter-spacing:0.05px;">Audio</div>
<svg class="s" style="left:1476.5px;top:911.5px;" width="8" height="10" viewBox="0 0 8 10"><path d="M1 0.8L6 5L1 9.2" fill="none" stroke="#222" stroke-width="1.3"/></svg>
<div class="t" style="left:1142px;top:936.13px;font-size:14.5px;color:#050505;letter-spacing:0.05px;">Video</div>
<svg class="s" style="left:1476.5px;top:937.5px;" width="8" height="10" viewBox="0 0 8 10"><path d="M1 0.8L6 5L1 9.2" fill="none" stroke="#222" stroke-width="1.3"/></svg>
<div class="t" style="left:1142px;top:962.13px;font-size:14.5px;color:#050505;letter-spacing:0.05px;">UI</div>
<svg class="s" style="left:1476.5px;top:963.5px;" width="8" height="10" viewBox="0 0 8 10"><path d="M1 0.8L6 5L1 9.2" fill="none" stroke="#222" stroke-width="1.3"/></svg>
<div class="t" style="left:1142px;top:988.13px;font-size:14.5px;color:#050505;letter-spacing:0.05px;">AI</div>
<svg class="s" style="left:1476.5px;top:989.5px;" width="8" height="10" viewBox="0 0 8 10"><path d="M1 0.8L6 5L1 9.2" fill="none" stroke="#222" stroke-width="1.3"/></svg>
<div class="t" style="left:1142px;top:1014.13px;font-size:14.5px;color:#050505;letter-spacing:0.05px;">UI Toolkit</div>
<svg class="s" style="left:1476.5px;top:1015.5px;" width="8" height="10" viewBox="0 0 8 10"><path d="M1 0.8L6 5L1 9.2" fill="none" stroke="#222" stroke-width="1.3"/></svg>
<div class="t" style="left:1142px;top:1040.13px;font-size:14.5px;color:#050505;letter-spacing:0.05px;">Rendering</div>
<svg class="s" style="left:1476.5px;top:1041.5px;" width="8" height="10" viewBox="0 0 8 10"><path d="M1 0.8L6 5L1 9.2" fill="none" stroke="#222" stroke-width="1.3"/></svg>
<div class="t" style="left:1142px;top:1066.13px;font-size:14.5px;color:#050505;letter-spacing:0.05px;">Volume</div>
<svg class="s" style="left:1476.5px;top:1067.5px;" width="8" height="10" viewBox="0 0 8 10"><path d="M1 0.8L6 5L1 9.2" fill="none" stroke="#222" stroke-width="1.3"/></svg>
<div class="t" style="left:1142px;top:1092.23px;font-size:14.5px;color:#050505;letter-spacing:0.05px;">Camera</div>
<div class="t" style="left:1142px;top:1118.23px;font-size:14.5px;color:#050505;letter-spacing:0.05px;">Visual Scripting Scene Variables</div>
<svg class="s" style="left:0px;top:0px;pointer-events:none;" width="1919" height="1141" viewBox="0 0 1919 1141">
<g stroke="#000" stroke-opacity="0.45" stroke-width="3.2" fill="#000" fill-opacity="0.45">
<path d="M772 591L1014 531"/><path d="M1024 528.3L1013.8 528.2L1015.3 533Z" stroke-width="2"/>
<path d="M1025 690L1090 768"/><path d="M1095.7 774.8L1088.5 768.9L1092 766.3Z" stroke-width="2"/>
</g>
<path d="M772 591L1014 531" stroke="#f6f6f6" stroke-width="1.5"/>
<path d="M1024 528.3L1013.8 528.2L1015.3 533Z" fill="#ffffff" stroke="#ffffff" stroke-width="0.8"/>
<path d="M1025 690L1090 768" stroke="#f6f6f6" stroke-width="1.5"/>
<path d="M1095.7 774.8L1088.5 768.9L1092 766.3Z" fill="#ffffff" stroke="#ffffff" stroke-width="0.8"/>
</svg>
<div class="r" style="left:0px;top:1140px;width:1919px;height:1px;background:#c2bcb2;"></div>
</body></html>
